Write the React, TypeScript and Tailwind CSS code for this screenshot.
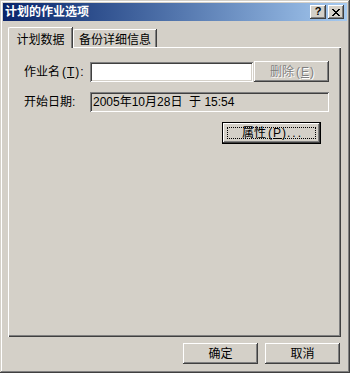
import React from "react";

const raised =
  "shadow-[inset_-1px_-1px_0_#404040,inset_1px_1px_0_#ffffff,inset_-2px_-2px_0_#808080,inset_2px_2px_0_#d4d0c8]";
const sunken =
  "shadow-[inset_1px_1px_0_#808080,inset_-1px_-1px_0_#ffffff,inset_2px_2px_0_#404040,inset_-2px_-2px_0_#d4d0c8]";

function Acc({ ch }: { ch: string }) {
  return (
    <span className="inline-flex items-center">
      <span className="ml-[2px]">(</span>
      <u className="px-[1px]">{ch}</u>
      <span className="mr-[1px]">)</span>
    </span>
  );
}

export default function App() {
  return (
    <div
      className={`w-[350px] h-[373px] bg-[#d4d0c8] p-[3px] flex flex-col text-[12px] text-black leading-none font-['Liberation_Sans','Noto_Sans_CJK_SC',sans-serif] shadow-[inset_-1px_-1px_0_#404040,inset_1px_1px_0_#d4d0c8,inset_-2px_-2px_0_#808080,inset_2px_2px_0_#ffffff]`}
    >
      {/* Title bar */}
      <div className="h-[18px] flex items-center bg-linear-to-r from-[#0a246a] to-[#a6caf0] pl-[2px] pr-[3px]">
        <span className="flex-1 text-white font-bold text-[12px] leading-none">计划的作业选项</span>
        <div className={`w-[16px] h-[14px] bg-[#d4d0c8] ${raised} flex items-center justify-center text-[11px] font-bold pb-[1px]`}>
          ?
        </div>
        <div className={`w-[16px] h-[14px] ml-[2px] bg-[#d4d0c8] ${raised} flex items-center justify-center`}>
          <svg width="8" height="7" viewBox="0 0 8 7" shapeRendering="crispEdges">
            <path d="M0 0h2v1h-2zM6 0h2v1h-2zM1 1h2v1h-2zM5 1h2v1h-2zM2 2h4v1h-4zM3 3h2v1h-2zM2 4h4v1h-4zM1 5h2v1h-2zM5 5h2v1h-2zM0 6h2v1h-2zM6 6h2v1h-2z" fill="#000" />
          </svg>
        </div>
      </div>

      {/* Tabs */}
      <div className="mt-[6px] ml-[5px] flex items-end h-[20px]">
        <div className="relative z-10 w-[64px] h-[21px] -mb-[1px] bg-[#d4d0c8] border-l border-t border-white rounded-tl-[2px] shadow-[inset_-1px_0_0_#808080,1px_0_0_#404040] flex justify-center pt-[6px]">
          计划数据
        </div>
        <div className="w-[83px] h-[18px] ml-[1px] bg-[#d4d0c8] border-l border-t border-white rounded-tl-[2px] shadow-[inset_-1px_0_0_#808080,1px_0_0_#404040] flex justify-center pt-[4px]">
          备份详细信息
        </div>
      </div>

      {/* Panel */}
      <div className="ml-[5px] mr-[6px] h-[290px] border-l border-t border-white shadow-[inset_-1px_-1px_0_#404040,inset_-2px_-2px_0_#808080] pt-[13px] pl-[15px] flex flex-col">
        <div className="flex items-center h-[21px]">
          <span className="w-[66px] flex items-center">
            作业名<Acc ch="T" />:
          </span>
          <div className={`w-[163px] h-[20px] bg-white ${sunken}`} />
          <div
            className={`w-[75px] h-[21px] ml-[1px] ${raised} flex items-center justify-center text-[#808080] [text-shadow:1px_1px_0_#ffffff] pl-[2px]`}
          >
            删除<Acc ch="E" />
          </div>
        </div>
        <div className="flex items-center h-[20px] mt-[10px]">
          <span className="w-[66px]">开始日期:</span>
          <div className={`w-[239px] h-[20px] ${sunken} flex items-center pl-[3px] whitespace-pre`}>
            2005年10月28日  于 15:54
          </div>
        </div>
        <div className="mt-[10px] ml-[198px]">
          <div className="relative w-[99px] h-[22px] border border-black">
            <div className={`w-full h-full ${raised} flex items-center justify-center pl-[2px]`}>
              属性<Acc ch="P" />
              <span className="tracking-[2px]">...</span>
            </div>
            <div className="absolute inset-[4px] border border-dotted border-black" />
          </div>
        </div>
      </div>

      {/* Bottom buttons */}
      <div className="mt-[6px] flex justify-end pr-[7px] gap-[7px]">
        <div className={`w-[75px] h-[21px] ${raised} flex items-center justify-center`}>确定</div>
        <div className={`w-[75px] h-[21px] ${raised} flex items-center justify-center`}>取消</div>
      </div>
    </div>
  );
}
